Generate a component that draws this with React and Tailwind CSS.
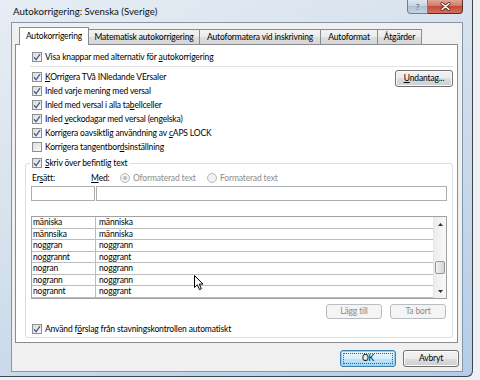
import React from "react";

const Check = ({ checked = true }) => (
  <span className="w-[10px] h-[10px] shrink-0 border border-[#8e8f8f] bg-[linear-gradient(135deg,#dcdcdc,#f9f9f9)] flex items-center justify-center">
    {checked && (
      <svg width="8" height="8" viewBox="0 0 8 8">
        <path d="M1 4.2 L3.1 6.6 L7 1.2" stroke="#4b5f8c" strokeWidth="1.3" fill="none" />
      </svg>
    )}
  </span>
);

const Radio = ({ on }) => (
  <span className="w-[10px] h-[10px] shrink-0 rounded-full border border-[#b8b8b8] bg-[#f2f2f2] flex items-center justify-center">
    {on && <span className="w-[4px] h-[4px] rounded-full bg-[#bdbdbd]" />}
  </span>
);

const Row = ({ checked = true, children, className = "" }) => (
  <div className={"h-[14px] flex items-center gap-[3px] " + className}>
    <Check checked={checked} />
    <span className="whitespace-nowrap">{children}</span>
  </div>
);

const Btn = ({ children, className = "" }) => (
  <div
    className={
      "h-[17px] rounded-[3px] border border-[#707070] bg-[linear-gradient(#f2f2f2,#ebebeb_50%,#dddddd_50%,#cfcfcf)] shadow-[inset_0_0_0_1px_#fbfbfb] flex items-center justify-center " +
      className
    }
  >
    {children}
  </div>
);

const DisBtn = ({ children, className = "" }) => (
  <div
    className={
      "h-[15px] rounded-[3px] border border-[#b9bdc0] bg-[#f4f4f4] text-[#8a8a8a] flex items-center justify-center " +
      className
    }
  >
    {children}
  </div>
);

const rows = [
  ["mäniska", "människa"],
  ["männsika", "människa"],
  ["noggran", "noggrann"],
  ["noggrannt", "noggrant"],
  ["nogran", "noggrann"],
  ["nogrann", "noggrann"],
  ["nogrannt", "noggrant"],
];

const tabs = [
  ["Matematisk autokorrigering", "w-[112px]"],
  ["Autoformatera vid inskrivning", "w-[122px]"],
  ["Autoformat", "w-[58px]"],
  ["Åtgärder", "w-[45px]"],
];

export default function App() {
  return (
    <div className="w-[480px] h-[380px] bg-[#eef0f2] overflow-hidden relative font-['Lato',sans-serif] text-[8.5px] tracking-[-0.15px] text-black leading-none">
      {/* window */}
      <div className="w-[473px] h-[377px] rounded-br-[6px] border-r border-b border-[#3e4652] bg-[linear-gradient(155deg,#e6edf4_0%,#d9e3ed_35%,#c5d7ea_70%,#b4cde8_100%)] flex flex-col">
        {/* title bar */}
        <div className="h-[22px] flex items-start">
          <span className="pl-[13px] pt-[7px] text-[9.7px] tracking-normal whitespace-nowrap text-[#111]">
            Autokorrigering: Svenska (Sverige)
          </span>
          <div className="ml-auto mr-[9px] flex">
            <div className="w-[21px] h-[14px] rounded-bl-[4px] border border-t-0 border-[#6f7f94] bg-[linear-gradient(#dfe7f0,#c3d0de_50%,#aebfd2_50%,#c6d6e6)] flex items-center justify-center text-[8px] text-[#556275]">
              ?
            </div>
            <div className="w-[35px] h-[14px] rounded-br-[4px] border border-t-0 border-l-0 border-[#5c2a22] bg-[linear-gradient(#e2a598,#d07a68_45%,#c24a36_50%,#d6715e)] flex items-center justify-center">
              <svg width="11" height="9" viewBox="0 0 11 9">
                <path d="M2 1.5 L9 7.5 M9 1.5 L2 7.5" stroke="#5a2a22" strokeWidth="3" strokeLinecap="round" />
                <path d="M2 1.5 L9 7.5 M9 1.5 L2 7.5" stroke="#ffffff" strokeWidth="1.6" strokeLinecap="round" />
              </svg>
            </div>
          </div>
        </div>

        {/* client */}
        <div className="ml-[11px] w-[452px] h-[350px] border border-[#8696a8] bg-[#f0f0f0] flex flex-col">
          {/* tabs */}
          <div className="mt-[4px] ml-[7px] h-[17px] flex items-end relative z-10">
            <div className="w-[70px] h-[18px] -mb-px bg-white border border-b-0 border-[#898c95] flex items-center justify-center relative z-10">
              Autokorrigering
            </div>
            {tabs.map(([t, w]) => (
              <div
                key={t}
                className={
                  w +
                  " h-[15px] -ml-px border border-b-0 border-[#898c95] bg-[linear-gradient(#f3f3f3,#ebebeb_50%,#dedede_50%,#d6d6d6)] flex items-center justify-center whitespace-nowrap"
                }
              >
                {t}
              </div>
            ))}
          </div>

          {/* panel */}
          <div className="ml-[3px] w-[443px] h-[299px] border border-[#898c95] bg-white flex flex-col">
            <Row className="mt-[5px] pl-[16px]">
              Visa knappar med alternativ för <u>a</u>utokorrigering
            </Row>
            <div className="mt-[2px] ml-[14px] w-[423px] h-px bg-[#e2e2e2]" />
            <div className="mt-[3px] flex">
              <div className="pl-[16px] flex flex-col">
                <Row>
                  <u>K</u>Orrigera TVå INledande VErsaler
                </Row>
                <Row>Inled varje mening med versal</Row>
                <Row>
                  Inled med versal i alla ta<u>b</u>ellceller
                </Row>
                <Row>
                  Inled <u>v</u>eckodagar med versal (engelska)
                </Row>
                <Row>
                  Korrigera oavsiktlig användning av <u>c</u>APS LOCK
                </Row>
                <Row checked={false}>
                  Korrigera tangentbor<u>d</u>sinställning
                </Row>
              </div>
              <Btn className="ml-auto mr-[4px] w-[58px]">
                <span>
                  <u>U</u>ndantag...
                </span>
              </Btn>
            </div>

            {/* group box */}
            <fieldset className="mt-[2px] ml-[9px] w-[428px] border border-[#d5dfe5] rounded-[3px] pb-[1px]">
              <legend className="ml-[4px] px-[2px]">
                <span className="h-[14px] flex items-center gap-[3px]">
                  <Check />
                  <span className="whitespace-nowrap">
                    <u>S</u>kriv över befintlig text
                  </span>
                </span>
              </legend>
              <div className="flex flex-col">
                <div className="mt-[1px] h-[14px] pl-[6px] grid grid-cols-[59px_29px_87px_auto] items-center">
                  <span>
                    Er<u>s</u>ätt:
                  </span>
                  <span>
                    <u>M</u>ed:
                  </span>
                  <span className="flex items-center gap-[3px] text-[#8d8d8d]">
                    <Radio on />
                    Oformaterad text
                  </span>
                  <span className="flex items-center gap-[3px] text-[#8d8d8d]">
                    <Radio />
                    Formaterad text
                  </span>
                </div>
                <div className="mt-[1px] ml-[5px] flex gap-[1px]">
                  <div className="w-[64px] h-[15px] border border-[#abadb3] bg-white" />
                  <div className="w-[351px] h-[15px] border border-[#abadb3] bg-white" />
                </div>
                <div className="mt-[15px] ml-[5px] w-[416px] h-[83px] border border-[#a0a0a0] flex">
                  <div className="flex-1 flex flex-col">
                    {rows.map(([a, b]) => (
                      <div key={a} className="h-[11.5px] border-b border-[#bdbdbd] flex items-center">
                        <span className="w-[64px] h-full border-r border-[#bdbdbd] pl-[1px] flex items-center">{a}</span>
                        <span className="pl-[3px]">{b}</span>
                      </div>
                    ))}
                  </div>
                  <div className="w-[13px] border-l border-[#e6e6e6] bg-[linear-gradient(90deg,#ececec,#f8f8f8)] flex flex-col">
                    <div className="h-[14px] flex items-center justify-center">
                      <svg width="5" height="3" viewBox="0 0 5 3"><path d="M0 3 L2.5 0 L5 3 Z" fill="#333" /></svg>
                    </div>
                    <div className="h-[30px]" />
                    <div className="mx-[1px] h-[13px] rounded-[2px] border border-[#959595] bg-[linear-gradient(90deg,#f4f4f4,#e2e2e2_50%,#d6d6d6)]" />
                    <div className="flex-1" />
                    <div className="h-[13px] flex items-center justify-center">
                      <svg width="5" height="3" viewBox="0 0 5 3"><path d="M0 0 L2.5 3 L5 0 Z" fill="#333" /></svg>
                    </div>
                  </div>
                </div>
                <div className="mt-[5px] pr-[6px] flex justify-end gap-[8px]">
                  <DisBtn className="w-[56px]">Lägg till</DisBtn>
                  <DisBtn className="w-[56px]">Ta bort</DisBtn>
                </div>
                <Row className="mt-[3px] pl-[6px]">
                  Använd f<u>ö</u>rslag från stavningskontrollen automatiskt
                </Row>
              </div>
            </fieldset>
          </div>

          {/* dialog buttons */}
          <div className="mt-[7px] pr-[3px] flex justify-end gap-[7px]">
            <div className="w-[56px] h-[17px] rounded-[3px] border border-[#3c7fb1] bg-[linear-gradient(#eaf6fd,#d9f0fc_50%,#bee6fd_50%,#a7d9f5)] shadow-[inset_0_0_0_1px_#8fd3f5] p-[2px] flex">
              <div className="flex-1 border border-dotted border-[#555] flex items-center justify-center">OK</div>
            </div>
            <Btn className="w-[56px]">Avbryt</Btn>
          </div>
        </div>
      </div>

      {/* mouse cursor */}
      <svg className="absolute left-[194px] top-[275px]" width="10" height="16" viewBox="0 0 10 16">
        <path d="M0.5 0.5 L0.5 12.5 L3.4 9.8 L5.5 14.6 L7.4 13.8 L5.3 9.1 L9 9.1 Z" fill="#fff" stroke="#000" strokeWidth="1" strokeLinejoin="round" />
      </svg>
    </div>
  );
}
